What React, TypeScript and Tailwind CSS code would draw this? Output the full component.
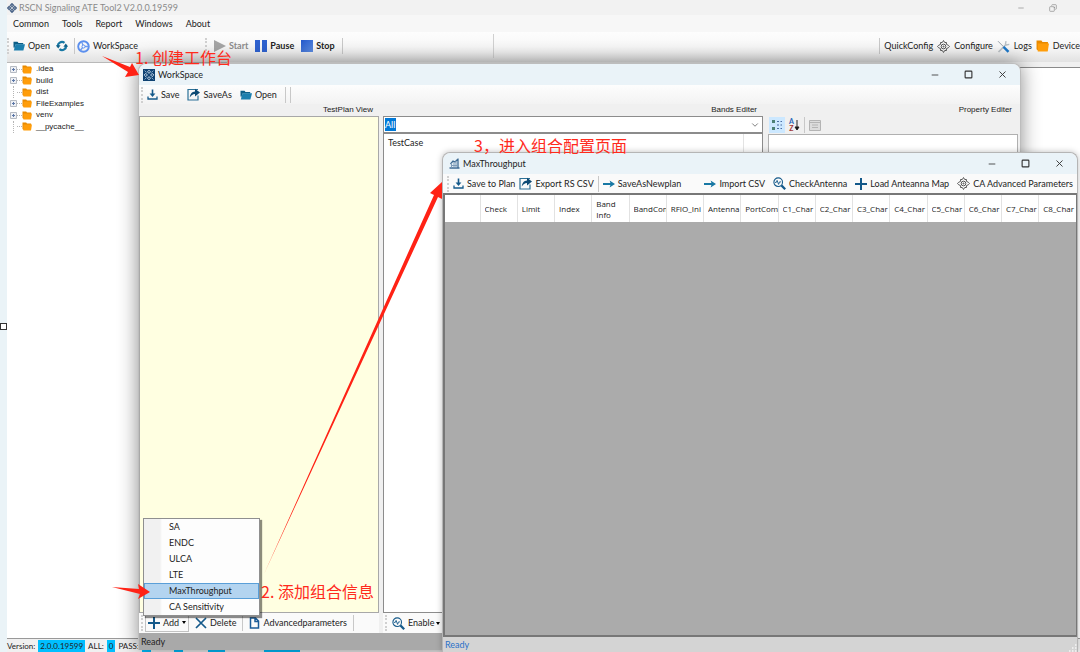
import React, { useState } from 'react';
import { ChevronDown, Copy, Minus, Square, X } from 'lucide-react';

const TREE = [
  { name: '.idea', open: true },
  { name: 'build', open: true },
  { name: 'dist', open: false },
  { name: 'FileExamples', open: true },
  { name: 'venv', open: true },
  { name: '__pycache__', open: false },
];

const ADD_MENU = ['SA', 'ENDC', 'ULCA', 'LTE', 'MaxThroughput', 'CA Sensitivity'];

const COLUMNS = [
  'Check', 'Limit', 'Index', 'Band Info', 'BandCom', 'RFIO_Ini', 'Antenna', 'PortCom',
  'C1_Char', 'C2_Char', 'C3_Char', 'C4_Char', 'C5_Char', 'C6_Char', 'C7_Char', 'C8_Char',
];

const STATUS = [
  { label: 'Version:', value: '2.0.0.19599' },
  { label: 'ALL:', value: '0' },
  { label: 'PASS:', value: '0' },
  { label: 'FAIL:', value: '0' },
  { label: 'Loop:', value: '0/0' },
  { label: 'TestTime:', value: '00:00:00' },
];

const FolderOpen = () => (
  <svg viewBox="0 0 12 10" className="w-3 h-[10px] shrink-0">
    <path d="M0.5 0.8h4l1 1.2h4.700v1.600H2.600L1.200 7.500 0.5 6z" fill="#0d5f88" />
    <path d="M2.600 3.300h9.400L10.400 9.400H0.800z" fill="#1c7fae" />
  </svg>
);

const FolderOrange = ({ className = 'w-[10px] h-[9px]' }: { className?: string }) => (
  <svg viewBox="0 0 12 11" className={`shrink-0 ${className}`}>
    <path d="M0.500 0.500h4.500l1 1.400h5V9.500H1.500L0.500 8.500z" fill="#e88a00" />
    <path d="M1.600 3.200H12L10.800 10.500H1.600z" fill="#ff9d0a" />
  </svg>
);

const SaveIcon = () => (
  <svg viewBox="0 0 11 11" className="w-[11px] h-[11px] shrink-0" fill="none" stroke="#14598a">
    <path d="M1 7.500V10h9V7.500" strokeWidth="1.300" />
    <path d="M5.500 0.500v5" strokeWidth="1.600" />
    <path d="M2.600 4.500h5.800L5.500 8z" fill="#14598a" stroke="none" />
  </svg>
);

const ShareIcon = () => (
  <svg viewBox="0 0 13 13" className="w-[13px] h-[13px] shrink-0">
    <path d="M11 7.500V12H1V1.500h10" fill="none" stroke="#2c7197" strokeWidth="1.200" />
    <path d="M2.800 9.500C3 6 5 3.600 8 3.400V0.800L13 4.600 8 8.400V6C5.800 6 4.200 7.200 2.800 9.500z" fill="#0d4a74" />
  </svg>
);

const ArrowIcon = () => (
  <svg viewBox="0 0 12 8" className="w-3 h-2 shrink-0" fill="#1878a4">
    <path d="M0 2.900h7.400L6.600 0.400 12 4 6.600 7.600l0.800-2.500H0z" />
  </svg>
);

const PlusIcon = () => (
  <svg viewBox="0 0 12 12" className="w-3 h-3 shrink-0" stroke="#14598a" strokeWidth="2">
    <path d="M6 0v12M0 6h12" />
  </svg>
);

const CrossIcon = () => (
  <svg viewBox="0 0 12 12" className="w-3 h-3 shrink-0" stroke="#14598a" strokeWidth="1.700">
    <path d="M1 1l10 10M11 1L1 11" />
  </svg>
);

const RefreshIcon = () => (
  <svg viewBox="0 0 12 12" className="w-3 h-3 shrink-0">
    <path d="M2 7A4.100 4.100 0 0 1 8.500 2.800M10 5A4.100 4.100 0 0 1 3.500 9.200" fill="none" stroke="#1878a4" strokeWidth="2.200" />
    <path d="M0 5.200h4.600L2.200 8.600zM12 6.800H7.400L9.800 3.400z" fill="#0f6088" />
  </svg>
);

const GearIcon = () => (
  <svg viewBox="0 0 24 24" className="w-[13px] h-[13px] shrink-0" fill="none" stroke="#4a4a4a" strokeWidth="1.7">
    <path d="M12 1l2.200 3.600h3.200v3.400L21 9.800 23 12l-2 2.200-3.600 1.800v3.400h-3.200L12 23l-2.200-3.600H6.600V16L3 14.200 1 12l2-2.200L6.600 8V4.600h3.200z" />
    <circle cx="12" cy="12" r="4.300" />
    <circle cx="12" cy="12" r="1" />
  </svg>
);

const SearchIcon = () => (
  <svg viewBox="0 0 13 13" className="w-[13px] h-[13px] shrink-0" fill="none" stroke="#14598a">
    <circle cx="5.2" cy="5.2" r="4.300" strokeWidth="1.100" />
    <path d="M8.400 8.400l3.800 3.800" strokeWidth="2.200" />
    <path d="M2 5.400h1.300l.8-2 1.500 4 .9-2.500h1.500" strokeWidth="0.900" />
  </svg>
);

const ToolsIcon = () => (
  <svg viewBox="0 0 13 13" className="w-[13px] h-[13px] shrink-0" fill="none">
    <path d="M1.500 12L9 4.500" stroke="#b9bfc4" strokeWidth="1.700" />
    <path d="M9 1.200L8.500 4l1 1 2.800-.6" stroke="#b9bfc4" strokeWidth="1.400" />
    <path d="M1 1.200l5.500 5.500" stroke="#9aa3aa" strokeWidth="1" />
    <path d="M6.500 6.800l5 5" stroke="#1c77c9" strokeWidth="2.400" />
  </svg>
);

const WheelIcon = () => (
  <svg viewBox="0 0 13 13" className="w-[13px] h-[13px] shrink-0" fill="none">
    <circle cx="6.500" cy="6.500" r="5.300" stroke="#5b8fee" strokeWidth="1.900" />
    <path d="M6.500 6.500L4.500 1.600M6.500 6.500h5M6.500 6.500l-3.300 4" stroke="#6d9cf0" strokeWidth="1.300" />
    <circle cx="6.500" cy="6.500" r="1.500" fill="#fff" stroke="#5b8fee" />
  </svg>
);

const AppIcon = () => (
  <svg viewBox="0 0 12 12" className="w-[10px] h-[10px] shrink-0" fill="none" stroke="#4a6488" strokeWidth="1.600">
    <path d="M6 .8L7.800 2.600 6 4.400 4.200 2.600zM6 7.600l1.800 1.800L6 11.200 4.200 9.400zM2.600 4.200L4.400 6 2.600 7.800.8 6zM9.400 4.200L11.200 6 9.400 7.800 7.600 6z" />
  </svg>
);

const WorkIcon = () => (
  <svg viewBox="0 0 12 12" className="w-3 h-3 shrink-0">
    <path d="M0 0h12v12H0z" fill="#0f4272" />
    <path d="M6 1.200L7.500 2.800 6 4.400 4.500 2.800zM6 7.600l1.500 1.600L6 10.800 4.500 9.200zM2.800 4.400L4.400 6 2.800 7.600 1.200 6zM9.200 4.400L10.800 6 9.200 7.600 7.600 6z" fill="none" stroke="#dceaf6" strokeWidth="0.900" />
    <path d="M1.500 1.500l2 2M10.500 1.500l-2 2M1.500 10.500l2-2M10.500 10.500l-2-2" stroke="#9fc0dc" strokeWidth="0.800" />
  </svg>
);

const ChartIcon = () => (
  <svg viewBox="0 0 11 11" className="w-[11px] h-[11px] shrink-0" fill="none" stroke="#3e6a92">
    <path d="M0.500 10h10M9 0.500v9M1.500 6l2.500-3 2 1L9 1" strokeWidth="1.300" />
    <path d="M2.500 5v4.500M5 4v5.500M7 3v6.500M2 7.500h6" stroke="#7f9cb8" strokeWidth="1.100" />
  </svg>
);

const Grip = () => <span className="w-0 h-4 shrink-0 border-l-2 border-dotted border-[#d0d0d0]" />;
const Sep = () => <span className="w-px h-4 shrink-0 bg-[#c8c8c8]" />;
const Caret = () => <span className="shrink-0 border-x-2 border-t-[3px] border-x-transparent border-t-black" />;

const ToolButton = ({ icon, label, className = '' }: { icon?: React.ReactNode; label: string; className?: string }) => (
  <button type="button" className={`flex items-center gap-[3px] whitespace-nowrap ${className}`}>
    {icon}
    {label}
  </button>
);

const Caption = ({ icon, title }: { icon: React.ReactNode; title: string }) => (
  <header className="flex items-center h-[21px] shrink-0 px-1 bg-[#eaf3f8] rounded-t-lg">
    {icon}
    <h2 className="ml-[3px] flex-1">{title}</h2>
    <div className="flex items-center gap-6 mr-2 text-[#333]">
      <button type="button" aria-label="Minimize"><Minus className="w-[10px] h-[10px]" /></button>
      <button type="button" aria-label="Maximize"><Square className="w-[9px] h-[9px]" strokeWidth={3} /></button>
      <button type="button" aria-label="Close"><X className="w-[11px] h-[11px]" /></button>
    </div>
  </header>
);

const FileTree = () => (
  <ul className="grid grid-rows-6 h-[69px] px-[3px] text-[8px]">
    {TREE.map((node) => (
      <li key={node.name} className="flex items-center h-3">
        <span className="flex items-center justify-center w-[7px] shrink-0">
          {node.open ? (
            <svg viewBox="0 0 7 7" className="w-[7px] h-[7px]">
              <path d="M0.500 0.500h6v6h-6z" fill="#eef0f5" stroke="#b5bac2" />
              <path d="M2 3.500h3M3.500 2v3" stroke="#5c78a8" />
            </svg>
          ) : (
            <span className="h-3 border-l border-dotted border-[#b5b5b5]" />
          )}
        </span>
        <span className="w-[5px] shrink-0 border-t border-dotted border-[#b5b5b5]" />
        <FolderOrange />
        <span className="ml-1 font-['Liberation_Sans',sans-serif]">{node.name}</span>
      </li>
    ))}
  </ul>
);

const PaneTitle = ({ children }: { children: React.ReactNode }) => (
  <h3 className="h-3 shrink-0 pr-[6px] text-right text-[8px] leading-3 font-['Liberation_Sans',sans-serif]">{children}</h3>
);

const AddMenu = () => {
  const [active, setActive] = useState('MaxThroughput');

  return (
    <ul className="absolute left-1 bottom-[17px] z-10 w-[117px] border border-[#8f8f8f] bg-[linear-gradient(to_right,#f1f1f1_16px,#fdfdfd_18px)] shadow-[2px_2px_1px_rgba(0,0,0,0.45)]">
      {ADD_MENU.map((item) => (
        <li key={item}>
          <button
            type="button"
            onMouseEnter={() => setActive(item)}
            className={`block w-full h-4 pl-6 text-left border ${active === item ? 'bg-[#b3d4f0] border-[#5a9fd8]' : 'border-transparent'}`}
          >
            {item}
          </button>
        </li>
      ))}
    </ul>
  );
};

const WorkSpace = () => {
  const [menuOpen, setMenuOpen] = useState(true);

  return (
    <section className="absolute left-[138px] right-[59px] top-[63px] bottom-[2px] flex flex-col rounded-t-lg border border-b-0 border-[#bdbdbd] bg-[#f0f0f0] shadow-[0_0_20px_rgba(0,0,0,0.45)]">
      <Caption icon={<WorkIcon />} title="WorkSpace" />
      <div className="flex items-center gap-2 h-[19px] shrink-0 px-[2px] bg-linear-to-b from-[#fdfdfd] to-[#f3f3f3]">
        <Grip />
        <ToolButton icon={<SaveIcon />} label="Save" className="-ml-1" />
        <ToolButton icon={<ShareIcon />} label="SaveAs" />
        <ToolButton icon={<FolderOpen />} label="Open" />
        <div className="flex gap-1"><Sep /><Sep /></div>
      </div>

      <div className="flex flex-1 min-h-0 gap-1">
        <div className="relative flex flex-col w-[240px] shrink-0">
          <PaneTitle>TestPlan View</PaneTitle>
          <div className="flex-1 border border-[#a8a8a8] bg-[#ffffe1]" />
          {menuOpen && <AddMenu />}
          <div className="flex items-center gap-[6px] h-5 shrink-0 px-[2px] bg-[#fafafa]">
            <Grip />
            <button
              type="button"
              onClick={() => setMenuOpen(!menuOpen)}
              className="flex items-center gap-[3px] h-[18px] -ml-1 px-[2px] border border-t-0 border-[#c2c2c2]"
            >
              <PlusIcon />
              Add
              <Caret />
            </button>
            <ToolButton icon={<CrossIcon />} label="Delete" />
            <Sep />
            <ToolButton
              icon={
                <svg viewBox="0 0 11 12" className="w-[11px] h-3" fill="none" stroke="#1c5c98" strokeWidth="1.500">
                  <path d="M1.500 1h5L9.500 4v7h-8zM6 1v3.500h3.500" />
                </svg>
              }
              label="Advancedparameters"
            />
            <Sep />
          </div>
        </div>

        <div className="flex flex-col flex-1 min-w-0">
          <PaneTitle>Bands Editer</PaneTitle>
          <label className="flex items-center h-[17px] shrink-0 pl-px pr-[2px] border border-[#8c8c8c] bg-white">
            <select
              aria-label="Band"
              className="flex-1 h-[13px] appearance-none text-white outline-none bg-[linear-gradient(to_right,#0078d7_11px,white_11px)]"
            >
              <option>All</option>
            </select>
            <ChevronDown className="w-[10px] h-[10px] text-[#666]" />
          </label>
          <div className="flex flex-1 border border-[#8c8c8c] bg-white">
            <div className="flex-1 pl-1 pt-[3px] border-r border-[#e3e3e3]">TestCase</div>
            <div className="w-[18px]" />
          </div>
          <div className="flex items-center gap-[5px] h-5 shrink-0 px-[2px] bg-[#fafafa]">
            <Grip />
            <ToolButton icon={<SearchIcon />} label="Enable" />
            <span className="flex -ml-[3px]"><Caret /></span>
          </div>
        </div>

        <div className="flex flex-col w-[253px] shrink-0 pl-px pr-[2px]">
          <PaneTitle>Property Editer</PaneTitle>
          <div className="flex items-center gap-1 h-[18px] px-px shrink-0">
            <button type="button" aria-label="Categorized" className="p-[2px] bg-[#cce8ff]">
              <svg viewBox="0 0 12 12" className="w-3 h-3">
                <path d="M1 1h3v3H1zM1 8h3v3H1z" fill="#4b8076" />
                <path d="M6 2.500h2M6 6h2M6 9.500h2M9.500 2.500h1.500M9.500 6h1.500M9.500 9.500h1.500" stroke="#4a6da3" />
              </svg>
            </button>
            <button type="button" aria-label="Alphabetical" className="flex items-center text-[7px] leading-[7px] font-bold">
              <span className="flex flex-col"><span className="text-[#2465b8]">A</span><span className="text-[#a33838]">Z</span></span>
              <svg viewBox="0 0 6 12" className="w-[6px] h-3"><path d="M3 1v8M1 8l2 3 2-3z" stroke="#222" /></svg>
            </button>
            <Sep />
            <button type="button" aria-label="Property pages">
              <svg viewBox="0 0 12 12" className="w-3 h-3" fill="#dcdcdc" stroke="#b4b4b4">
                <path d="M0.500 1.500h11v10h-11zM1 3.500h10M3 6h6M3 8.500h6" />
              </svg>
            </button>
          </div>
          <div className="flex-1 border border-[#b0b0b0] bg-white" />
        </div>
      </div>
      <footer className="h-[17px] shrink-0 px-[2px] leading-[17px] bg-[#a9a9a9]">Ready</footer>
    </section>
  );
};

const MaxThroughput = () => (
  <section className="absolute left-[442px] right-[2px] top-[152px] bottom-0 flex flex-col rounded-t-lg border border-b-0 border-[#b5b5b5] bg-[#f0f0f0] shadow-[0_0_6px_rgba(0,0,0,0.25)]">
    <Caption icon={<span className="ml-[2px]"><ChartIcon /></span>} title="MaxThroughput" />
    <div className="flex items-center h-[19px] shrink-0 px-1 bg-[#fafafa]">
      <Grip />
      <ToolButton icon={<SaveIcon />} label="Save to Plan" className="ml-1" />
      <ToolButton icon={<ShareIcon />} label="Export RS CSV" className="mx-1" />
      <Sep />
      <ToolButton icon={<ArrowIcon />} label="SaveAsNewplan" className="ml-1" />
      <div className="flex items-center gap-2 ml-auto">
        <ToolButton icon={<ArrowIcon />} label="Import CSV" />
        <ToolButton icon={<SearchIcon />} label="CheckAntenna" />
        <ToolButton icon={<PlusIcon />} label="Load Anteanna Map" />
        <ToolButton icon={<GearIcon />} label="CA Advanced Parameters" />
      </div>
    </div>
    <div className="flex-1 border-2 border-r-[1px] border-[#777] bg-[#ababab] overflow-hidden">
      <table className="w-full table-fixed border-collapse bg-white text-[8px] font-['Open_Sans',sans-serif]">
        <thead>
          <tr className="h-[27px]">
            <td className="w-[35px]" />
            {COLUMNS.map((col) => (
              <th key={col} className="p-0 pl-1 text-left font-normal border-l border-[#e2e2e2] leading-[11px]">
                <div className={`overflow-hidden ${col === 'Band Info' ? 'w-6' : 'whitespace-nowrap'}`}>{col}</div>
              </th>
            ))}
          </tr>
        </thead>
      </table>
    </div>
    <footer className="flex items-end justify-between h-[15px] shrink-0 pl-[2px] leading-[15px] text-[#2a72c8] bg-[#d4d4d4]">
      Ready
      <svg viewBox="0 0 9 9" className="w-[9px] h-[9px]" stroke="#f5f5f5" strokeWidth="1.500" strokeDasharray="1.500 1.500">
        <path d="M1 8h8M4 5h5M7 2h2" />
      </svg>
    </footer>
  </section>
);

// red step notes and arrows drawn over the windows
const Notes = () => (
  <div className="absolute inset-0 z-20 pointer-events-none text-[16px] leading-5 text-[#ff2a1c] font-['Noto_Sans_CJK_SC',sans-serif]">
    <svg width="1080" height="652" className="absolute left-0 top-0" fill="#ff2215">
      <path d="M102 56L130 67 132 63 139 75 125 77 128 72z" />
      <path d="M112 587L139 589 138 584 150 592 138 599 140 594z" />
      <path d="M264 574L434 195 430 193 442 182 442 199 438 197z" />
    </svg>
    <p className="absolute left-[135px] top-[47px]">1. 创建工作台</p>
    <p className="absolute left-[261px] top-[581px]">2. 添加组合信息</p>
    <p className="absolute left-[474px] top-[135px]">3，进入组合配置页面</p>
  </div>
);

const App: React.FC = () => {
  return (
    <div className="relative flex h-screen overflow-hidden bg-[#eaf3f7] pl-[7px] text-[9px] leading-3 text-[#222] font-['Lato',sans-serif]">
      <span className="absolute left-0 top-1/2 w-[7px] h-[7px] -mt-[3px] border border-[#333] bg-white" />
      <div className="flex flex-col flex-1 min-w-0 bg-[#f0f0f0]">
        <header className="flex items-center h-[15px] shrink-0 text-[#8a8a8a] bg-[#f2f2f2]">
          <AppIcon />
          <h1 className="ml-[2px] flex-1">RSCN Signaling ATE Tool2 V2.0.0.19599</h1>
          <button type="button" aria-label="Minimize" className="mr-6"><Minus className="w-2 h-2" /></button>
          <button type="button" aria-label="Restore" className="mr-[23px]"><Copy className="w-2 h-2 rotate-90" /></button>
        </header>
        <nav className="flex items-center gap-[13px] h-[17px] shrink-0 pl-[6px] bg-[#f7f7f7]">
          {['Common', 'Tools', 'Report', 'Windows', 'About'].map((m) => (
            <button key={m} type="button">{m}</button>
          ))}
        </nav>
        <div className="flex items-center h-[30px] shrink-0 pb-[2px] whitespace-nowrap bg-linear-to-b from-[#fdfdfd] via-[#f7f7f7] to-[#e2e2e2]">
          <div className="flex items-center w-[196px] shrink-0">
            <Grip />
            <ToolButton icon={<FolderOpen />} label="Open" className="ml-1" />
            <button type="button" aria-label="Refresh" className="mx-[6px]">
              <RefreshIcon />
            </button>
            <Sep />
            <ToolButton icon={<WheelIcon />} label="WorkSpace" className="ml-[2px]" />
          </div>
          <div className="flex items-center gap-[7px] w-[291px] h-6 shrink-0 pl-[2px] border-r border-[#d0d0d0] font-bold">
            <Grip />
            <ToolButton
              icon={<svg viewBox="0 0 12 12" className="w-3 h-3"><path d="M0 0l12 6-12 6z" fill="#a5a5a5" /></svg>}
              label="Start"
              className="text-[#8c8c8c]"
            />
            <ToolButton
              icon={<svg viewBox="0 0 12 12" className="w-3 h-3"><path d="M0 0h5v12H0zM7 0h5v12H7z" fill="#2f62cf" /></svg>}
              label="Pause"
            />
            <ToolButton
              icon={<span className="w-3 h-3 bg-linear-to-br from-[#2458cb] to-[#5d8ce0]" />}
              label="Stop"
            />
            <Sep />
          </div>
          <div className="flex items-center gap-1 ml-auto">
            <Sep />
            <ToolButton label="QuickConfig" />
            <button type="button" className="flex items-center gap-1"><GearIcon />Configure</button>
            <button type="button" className="flex items-center gap-1"><ToolsIcon />Logs</button>
            <button type="button" className="flex items-center gap-1"><FolderOrange className="w-[13px] h-3" />Device</button>
          </div>
        </div>
        <div className="flex flex-1 min-h-0">
          <aside className="w-[220px] shrink-0 border-t border-[#b9b9b9] bg-white">
            <FileTree />
          </aside>
          <main className="flex-1 mt-[5px] border-t border-[#8a8a8a] bg-white" />
        </div>
        <footer className="flex items-center gap-[3px] h-[14px] shrink-0 whitespace-nowrap border-t border-[#999] bg-[#f0f0f0] text-[8px]">
          {STATUS.map((s) => (
            <React.Fragment key={s.label}>
              <span>{s.label}</span>
              <span className="px-[2px] bg-[#00bfff]">{s.value}</span>
            </React.Fragment>
          ))}
        </footer>
      </div>
      <WorkSpace />
      <MaxThroughput />
      <Notes />
    </div>
  );
};

export default App;
